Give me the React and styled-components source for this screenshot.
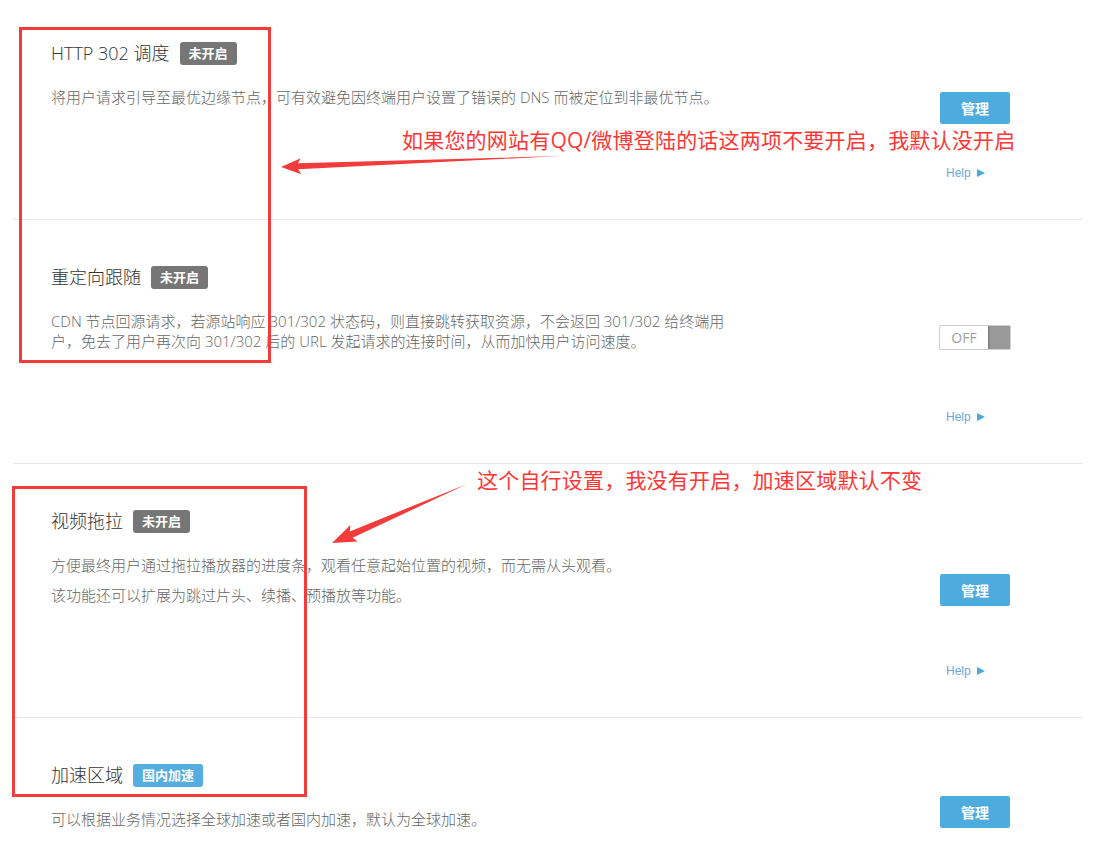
import React from 'react';
import styled, { createGlobalStyle } from 'styled-components';

const GlobalStyle = createGlobalStyle`
  html, body {
    margin: 0;
    padding: 0;
    background: #fff;
  }
  body {
    font-family: "Open Sans", "Noto Sans CJK SC", sans-serif;
    color: #333;
  }
`;

const Page = styled.div`
  position: relative;
  width: 1113px;
  height: 854px;
  overflow: hidden;
`;

const Panel = styled.div`
  margin-left: 13px;
  width: 1070px;
`;

const Section = styled.section`
  display: flex;
  padding: ${(p) => p.$top}px 73px 0 38px;
  border-bottom: 1px solid #e9e9e9;
`;

const Main = styled.div`
  flex: 1;
  padding-bottom: 112px;
`;

const TitleRow = styled.div`
  display: flex;
  align-items: center;
  gap: 10px;
  height: 24px;
`;

const Title = styled.h3`
  margin: 0;
  font-size: 18px;
  font-weight: 300;
  line-height: 24px;
  color: #333;
`;

const Badge = styled.span`
  display: inline-block;
  height: 23px;
  line-height: 23px;
  padding: 0 9px;
  border-radius: 3px;
  font-size: 13px;
  font-weight: 700;
  color: #fff;
  background: ${(p) => (p.$tone === 'blue' ? '#55aedf' : '#767676')};
`;

const Desc = styled.div`
  margin-top: 22px;
  max-width: 686px;
`;

const Para = styled.p`
  margin: 0 0 10px;
  font-size: 15px;
  font-weight: 300;
  line-height: 20px;
  color: #666;

  &:last-child {
    margin-bottom: 0;
  }
`;

const Side = styled.div`
  width: 70px;
  display: flex;
  flex-direction: column;
  align-items: flex-start;
  padding-top: ${(p) => p.$offset}px;
`;

const ManageButton = styled.button`
  width: 70px;
  height: 32px;
  border: 0;
  border-radius: 2px;
  background: #4eabdd;
  color: #fff;
  font-family: inherit;
  font-size: 14px;
  font-weight: 700;
  cursor: pointer;
`;

const Toggle = styled.div`
  display: flex;
  width: 72px;
  height: 25px;
  margin-left: -1px;
  box-sizing: border-box;
  border: 1px solid #cfcfcf;
  border-radius: 2px;
  background: #999;
  overflow: hidden;
`;

const ToggleKnob = styled.span`
  width: 48px;
  height: 100%;
  background: #fff;
  box-shadow: 1px 0 2px rgba(0, 0, 0, 0.25);
  color: #a0a0a0;
  font-size: 14px;
  line-height: 23px;
  text-align: center;
`;

const HelpLink = styled.a`
  display: flex;
  align-items: center;
  gap: 6px;
  margin: auto 0 39px 6px;
  height: 14px;
  font-family: "Liberation Sans", Arial, sans-serif;
  font-size: 12px;
  color: #6aa8dc;
  text-decoration: none;
`;

const HelpArrow = styled.span`
  width: 0;
  height: 0;
  border-top: 4px solid transparent;
  border-bottom: 4px solid transparent;
  border-left: 8px solid #4ba9dc;
`;

const Overlay = styled.div`
  position: absolute;
  inset: 0;
  pointer-events: none;
`;

const MarkBox = styled.div`
  position: absolute;
  left: ${(p) => p.$x}px;
  top: ${(p) => p.$y}px;
  width: ${(p) => p.$w}px;
  height: ${(p) => p.$h}px;
  box-sizing: border-box;
  border: 3px solid #f23b3b;
`;

const Note = styled.div`
  position: absolute;
  left: ${(p) => p.$x}px;
  top: ${(p) => p.$y}px;
  font-size: 21px;
  line-height: 24px;
  letter-spacing: 0.2px;
  color: #ff3636;
  white-space: nowrap;
`;

const ArrowLayer = styled.svg`
  position: absolute;
  left: 0;
  top: 0;
`;

const sections = [
  {
    title: 'HTTP 302 调度',
    badge: '未开启',
    top: 41,
    side: 51,
    control: 'button',
    help: true,
    desc: ['将用户请求引导至最优边缘节点，可有效避免因终端用户设置了错误的 DNS 而被定位到非最优节点。'],
  },
  {
    title: '重定向跟随',
    badge: '未开启',
    top: 45,
    side: 60,
    control: 'toggle',
    help: true,
    desc: ['CDN 节点回源请求，若源站响应 301/302 状态码，则直接跳转获取资源，不会返回 301/302 给终端用户，免去了用户再次向 301/302 后的 URL 发起请求的连接时间，从而加快用户访问速度。'],
  },
  {
    title: '视频拖拉',
    badge: '未开启',
    top: 45,
    side: 65,
    control: 'button',
    help: true,
    desc: ['方便最终用户通过拖拉播放器的进度条，观看任意起始位置的视频，而无需从头观看。', '该功能还可以扩展为跳过片头、续播、预播放等功能。'],
  },
  {
    title: '加速区域',
    badge: '国内加速',
    tone: 'blue',
    top: 45,
    side: 33,
    control: 'button',
    help: false,
    desc: ['可以根据业务情况选择全球加速或者国内加速，默认为全球加速。'],
  },
];

// tapered arrow: thin tail, wider near the head
const arrowPoints = (tail, tip, headLen, headHalf, shaftHalf) => {
  const dx = tip[0] - tail[0];
  const dy = tip[1] - tail[1];
  const len = Math.hypot(dx, dy);
  const ux = dx / len;
  const uy = dy / len;
  const nx = -uy;
  const ny = ux;
  const bx = tip[0] - ux * headLen;
  const by = tip[1] - uy * headLen;
  const pts = [
    [tail[0], tail[1]],
    [bx + nx * shaftHalf, by + ny * shaftHalf],
    [bx + nx * headHalf - ux * 3, by + ny * headHalf - uy * 3],
    [tip[0], tip[1]],
    [bx - nx * headHalf - ux * 3, by - ny * headHalf - uy * 3],
    [bx - nx * shaftHalf, by - ny * shaftHalf],
  ];
  return pts.map((p) => p.map((v) => v.toFixed(1)).join(',')).join(' ');
};

const SettingSection = ({ item }) => (
  <Section $top={item.top}>
    <Main>
      <TitleRow>
        <Title>{item.title}</Title>
        <Badge $tone={item.tone}>{item.badge}</Badge>
      </TitleRow>
      <Desc>
        {item.desc.map((text, i) => (
          <Para key={i}>{text}</Para>
        ))}
      </Desc>
    </Main>
    <Side $offset={item.side}>
      {item.control === 'toggle' ? (
        <Toggle>
          <ToggleKnob>OFF</ToggleKnob>
        </Toggle>
      ) : (
        <ManageButton>管理</ManageButton>
      )}
      {item.help && (
        <HelpLink href="#">
          Help <HelpArrow />
        </HelpLink>
      )}
    </Side>
  </Section>
);

const App = () => (
  <Page>
    <GlobalStyle />
    <Panel>
      {sections.map((item) => (
        <SettingSection key={item.title} item={item} />
      ))}
    </Panel>
    <Overlay>
      <MarkBox $x={19} $y={27} $w={252} $h={336} />
      <MarkBox $x={12} $y={486} $w={295} $h={311} />
      <Note $x={402} $y={128}>如果您的网站有QQ/微博登陆的话这两项不要开启，我默认没开启</Note>
      <Note $x={477} $y={468}>这个自行设置，我没有开启，加速区域默认不变</Note>
      <ArrowLayer width="1113" height="854" viewBox="0 0 1113 854">
        <polygon points={arrowPoints([560, 156], [281, 167], 17, 8, 3)} fill="#f23b3b" />
        <polygon points={arrowPoints([467, 484], [332, 543], 21, 9, 3.5)} fill="#f23b3b" />
      </ArrowLayer>
    </Overlay>
  </Page>
);

export default App;
